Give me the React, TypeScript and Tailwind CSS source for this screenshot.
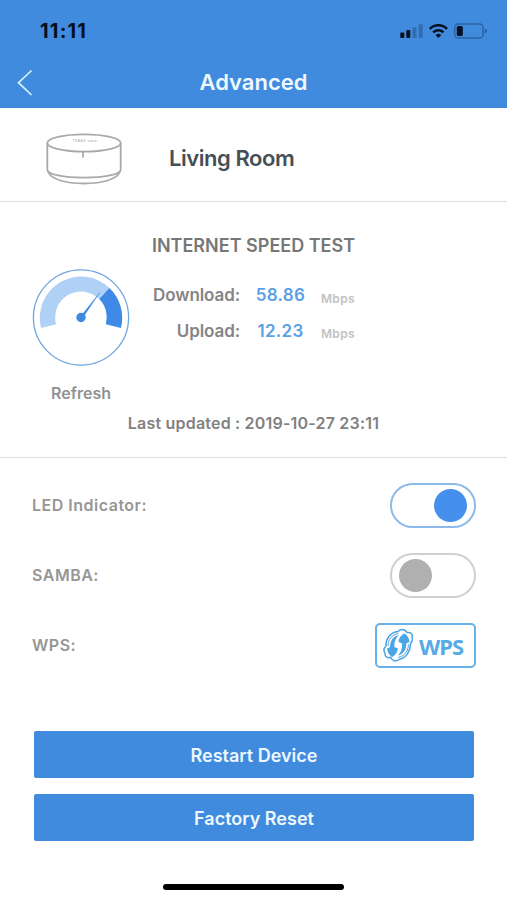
import type { ReactNode } from 'react';
import clsx from 'clsx';

function StatusBar() {
	return (
		<div className="flex h-[57px] items-center justify-between pt-[5px] pr-[19px] pl-10 text-[#07101f]">
			<span className="text-[20px] font-bold leading-6 tracking-[1.2px]">11:11</span>
			<svg width="88" height="18" viewBox="0 0 88 18" fill="currentColor">
				{/* signal */}
				<rect x="0.3" y="10.4" width="4" height="5.6" rx="1" />
				<rect x="6.3" y="8" width="4" height="8" rx="1" />
				<rect x="12.5" y="5.2" width="4" height="10.8" rx="1" opacity="0.25" />
				<rect x="18.7" y="2.2" width="4" height="13.8" rx="1" opacity="0.25" />
				{/* wifi */}
				<g fill="none" stroke="currentColor" strokeWidth="2.5">
					<path d="M29.8 6.8a12.4 12.4 0 0 1 17.2 0" />
					<path d="M33.2 10.4a7.6 7.6 0 0 1 10.4 0" />
				</g>
				<path d="M38.4 16l-2.9-3a4 4 0 0 1 5.8 0z" />
				{/* battery */}
				<rect x="54.7" y="1.9" width="28.4" height="14.2" rx="3.6" fill="none" stroke="currentColor" strokeWidth="1.5" opacity="0.32" />
				<rect x="56.8" y="3.9" width="6" height="10.2" rx="1.6" />
				<path d="M84.8 6.5v5c1.3-.5 2-1.4 2-2.5s-.7-2-2-2.5z" opacity="0.4" />
			</svg>
		</div>
	);
}

function RouterIcon() {
	return (
		<svg className="mt-[8px]" width="78" height="54" viewBox="0 0 78 54" fill="none" stroke="#a9a9a9" strokeWidth="1.8">
			<ellipse cx="39" cy="11" rx="36.7" ry="8.6" />
			<path d="M2.3 11v26.5c0 5 16.4 8.2 36.7 8.2s36.7-3.2 36.7-8.2V11" />
			<path d="M3 39.5C6 47.5 20.5 51.5 39 51.5s33-4 36-12" />
			<path d="M38 20v5.5" />
			<text x="39.5" y="10.4" fontSize="3.2" fontWeight="500" textAnchor="middle" textLength="24" fill="#a0a0a0" stroke="none">
				TENDA nova
			</text>
		</svg>
	);
}

function Gauge() {
	return (
		<svg width="98" height="98" viewBox="-49 -49.5 98 98">
			<circle r="47.6" fill="white" stroke="#6fa5e0" strokeWidth="1.3" />
			<path d="M-39.9 10.6A41.2 41.2 0 0 1 28.4 -29.6L18.2 -18.4A25.8 25.8 0 0 0 -24.9 6.7Z" fill="#afd1f6" />
			<path d="M28.4 -29.6A41.2 41.2 0 0 1 39.9 10.6L24.9 6.7A25.8 25.8 0 0 0 18.2 -18.4Z" fill="#3f8ae6" />
			<path d="M18.8 -25L2.6 -1L0.8 -2.4Z" fill="#3f8ae0" stroke="#3f8ae0" strokeWidth="0.4" />
			<circle r="4.7" fill="#3f8ae0" />
		</svg>
	);
}

function WpsLogo() {
	return (
		<svg width="31" height="34" viewBox="0 0 31 34" fill="none" stroke="#4ba5e4">
			<path
				d="M7.7 29.3C4 30.6 1.8 28.4 2.2 25.4C.4 23 .9 20 3 18C2.6 10.4 7.6 4.2 14.9 3.5C17.5 .8 22.6 .9 24 4.5C27.7 3.9 30.3 6.3 28.9 9.3C30.2 12 29 14 27.4 15.6C27.8 23.2 23 29.8 16.6 31.2C13.6 34 8.8 33 7.7 29.3Z"
				strokeWidth="1.5"
			/>
			<path d="M15.4 5.4C9.2 6.4 4.9 11.4 5 18" strokeWidth="1" />
			<path d="M15.2 29.4C21.4 28.2 25.6 23 25.4 16.4" strokeWidth="1" />
			<g fill="#4ba5e4" stroke="none">
				<path d="M15.8 7C10.2 8.4 6.8 13 7.1 19L4 20.6C4.6 24.6 6.2 27.6 9.2 29C12.2 27.4 14.4 24.6 15 20.6L11.4 19C10.9 14.4 12.6 10 15.8 7Z" />
				<path d="M14.8 27.6C20.4 26.2 23.6 21.4 23.3 15.4L26.6 13.8C26 9.8 24.2 6.8 21.2 5.4C18.2 7 16 9.8 15.4 13.8L19 15.4C19.5 20 18 24.6 14.8 27.6Z" />
			</g>
		</svg>
	);
}

function Toggle({ on = false }: { on?: boolean }) {
	return (
		<button
			type="button"
			role="switch"
			aria-checked={on}
			className={clsx(
				'flex h-[45px] w-[86px] items-center rounded-full border-2 px-[7px]',
				on ? 'justify-end border-[#8dbaea]' : 'border-[#d0d0d0]',
			)}
		>
			<span className={clsx('size-[33px] rounded-full', on ? 'bg-[#4590ec]' : 'bg-[#b0b0b0]')} />
		</button>
	);
}

function Speed({ label, value }: { label: string; value: string }) {
	return (
		<div className="flex h-[35.5px] items-center">
			<span className="w-[101px] text-right text-[17px] font-semibold tracking-[-0.1px] text-[#858585]">{label}</span>
			<span className="w-[81px] text-center text-[17px] font-semibold tracking-[0.3px] text-[#5a9fe4]">{value}</span>
			<span className="pt-[6px] text-[12px] font-semibold tracking-[0.3px] text-[#c2c2c2]">Mbps</span>
		</div>
	);
}

function SettingRow({ label, children }: { label: string; children: ReactNode }) {
	return (
		<div className="flex h-[70px] items-center justify-between">
			<span className="text-[16px] font-semibold tracking-[0.5px] text-[#969696]">{label}</span>
			{children}
		</div>
	);
}

export default function App() {
	return (
		<div className="flex h-[900px] w-[507px] flex-col overflow-hidden bg-white font-['Inter','Liberation_Sans',sans-serif]">
			<header className="h-[108px] bg-[#408bde]">
				<StatusBar />
				<div className="grid h-[51px] grid-cols-[60px_1fr_60px] items-center">
					<svg className="ml-4" width="18" height="28" viewBox="0 0 18 28" fill="none" stroke="#d9f2ff" strokeWidth="1.7">
						<path d="M15.5 1.5L2.5 13.7L15.5 26" />
					</svg>
					<h1 className="text-center text-[22px] font-semibold text-[#edf8ff]">Advanced</h1>
				</div>
			</header>

			<section className="flex h-[94px] items-center border-b border-[#dedede] pl-[45px]">
				<RouterIcon />
				<h2 className="ml-[46px] pt-2 text-[22px] font-semibold tracking-[-0.45px] text-[#474f56]">Living Room</h2>
			</section>

			<section className="h-[256px] border-b border-[#dedede] pt-[30px]">
				<h3 className="text-center text-[18px] leading-7 font-semibold text-[#777]">INTERNET SPEED TEST</h3>
				<div className="flex pl-8">
					<button type="button" className="flex w-[98px] flex-col items-center pt-[8px]">
						<Gauge />
						<span className="mt-[15px] text-[16px] leading-6 font-semibold text-[#919191]">Refresh</span>
					</button>
					<div className="ml-[9px] pt-[18px]">
						<Speed label="Download:" value="58.86" />
						<Speed label="Upload:" value="12.23" />
					</div>
				</div>
				<p className="mt-[6px] text-center text-[16px] leading-6 font-semibold tracking-[0.2px] text-[#818181]">
					Last updated : 2019-10-27 23:11
				</p>
			</section>

			<section className="pt-3 pr-[31px] pl-8">
				<SettingRow label="LED Indicator:">
					<Toggle on />
				</SettingRow>
				<SettingRow label="SAMBA:">
					<Toggle />
				</SettingRow>
				<SettingRow label="WPS:">
					<button
						type="button"
						className="flex h-[45px] w-[101px] items-center rounded-[5px] border-2 border-[#66b1e8] pl-[6px]"
					>
						<WpsLogo />
						<span className="ml-[5px] pt-0.5 font-['Noto_Sans',sans-serif] text-[22px] font-bold tracking-[-1px] text-[#56aae6]">
							WPS
						</span>
					</button>
				</SettingRow>
			</section>

			<div className="mt-[51px] flex flex-col gap-4 pr-[33px] pl-[34px]">
				<button type="button" className="h-[47px] rounded-[2px] bg-[#408bde] pt-px text-[18px] font-semibold text-[#edf8ff]">
					Restart Device
				</button>
				<button type="button" className="h-[47px] rounded-[2px] bg-[#408bde] pt-px text-[18px] font-semibold text-[#edf8ff]">
					Factory Reset
				</button>
			</div>

			<div className="mx-auto mt-[43px] h-[6px] w-[181px] rounded-full bg-black" />
		</div>
	);
}
